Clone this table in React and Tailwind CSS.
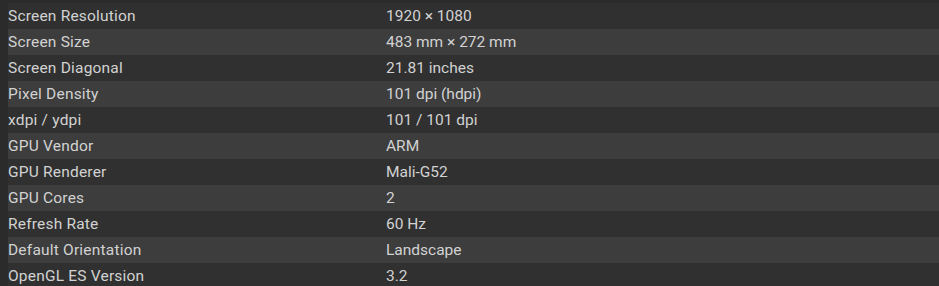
export default function App() {
  const rows = [
    ["Screen Resolution", "1920 × 1080"],
    ["Screen Size", "483 mm × 272 mm"],
    ["Screen Diagonal", "21.81 inches"],
    ["Pixel Density", "101 dpi (hdpi)"],
    ["xdpi / ydpi", "101 / 101 dpi"],
    ["GPU Vendor", "ARM"],
    ["GPU Renderer", "Mali-G52"],
    ["GPU Cores", "2"],
    ["Refresh Rate", "60 Hz"],
    ["Default Orientation", "Landscape"],
    ["OpenGL ES Version", "3.2"],
  ];
  return (
    <div className="w-[939px] h-[286px] overflow-hidden bg-[#2b2b2b] pl-2 pt-[3px]" style={{ fontFamily: "Roboto, sans-serif" }}>
      {rows.map(([k, v], i) => (
        <div key={k} className={`flex h-[26px] items-center pt-[2px] text-[15.5px] text-[#d2d2d2] ${i % 2 === 0 ? "bg-[#303030]" : "bg-[#3d3d3d]"}`}>
          <div className="w-[378px] shrink-0 tracking-[0.2px]">{k}</div>
          <div>{v}</div>
        </div>
      ))}
    </div>
  );
}
